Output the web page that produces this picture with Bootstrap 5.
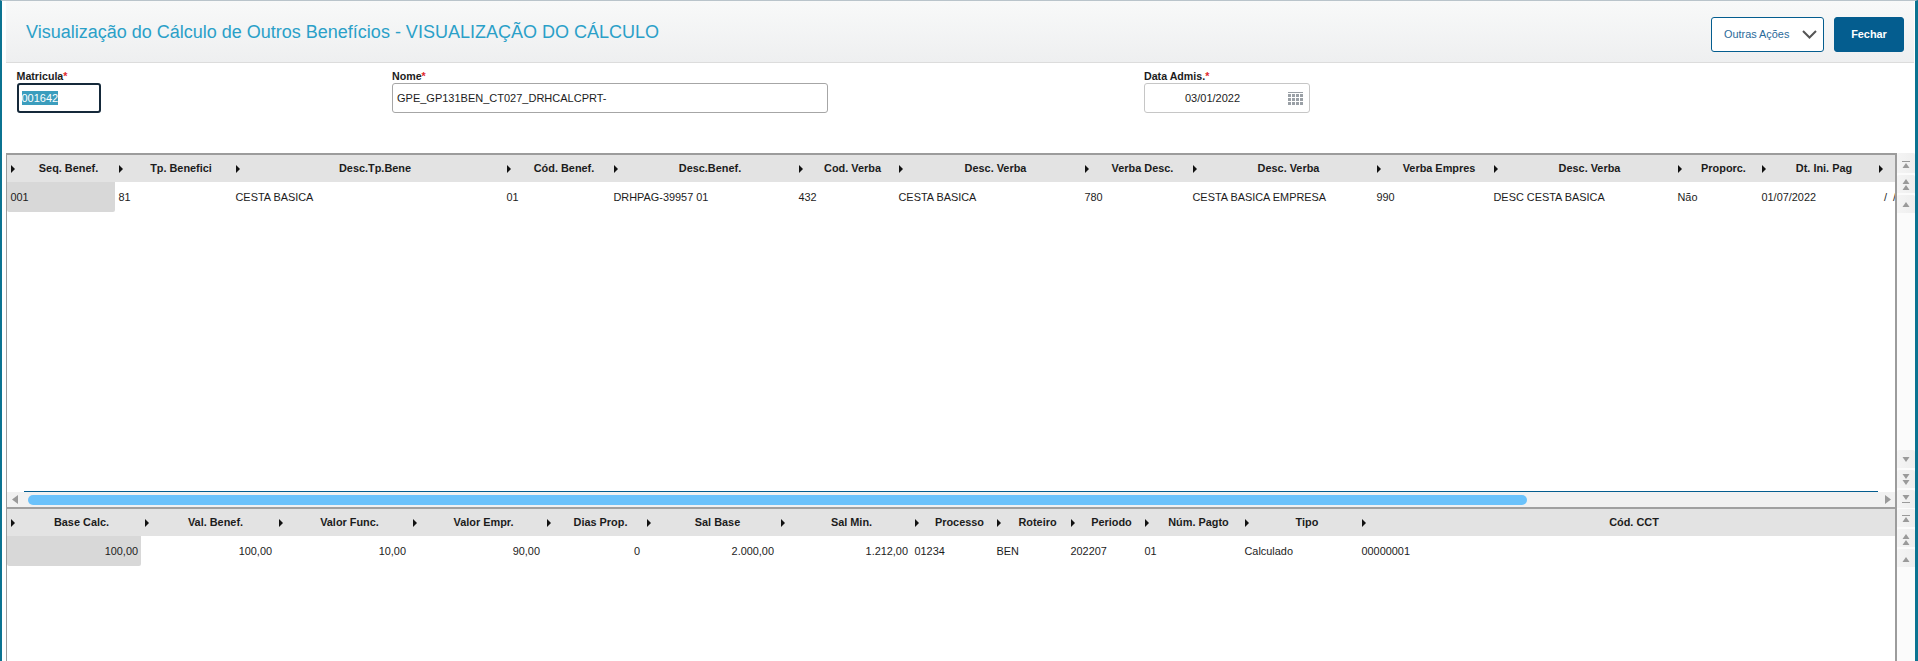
<!DOCTYPE html>
<html lang="pt-BR">
<head>
<meta charset="utf-8">
<title>Visualização do Cálculo</title>
<link href="https://cdn.jsdelivr.net/npm/bootstrap@5.3.0/dist/css/bootstrap.min.css" rel="stylesheet">
<style>
html,body{height:661px;overflow:hidden;background:#fff}
body{font-family:"Liberation Sans",Arial,sans-serif;font-size:10.67px;color:#1c1c1c}
.shell{height:661px;border-left:2px solid #0b7391;border-right:3px solid #0b7391;border-top:1px solid #b9c4cb;padding-left:4px}
.topbar{height:62px;flex:none;background:linear-gradient(#f8f9f9,#eeeff0);border-bottom:1px solid #dcdcdc;padding:0 10px 0 20px;margin-right:1px}
.page-title{font-size:18px;font-weight:400;color:#2aa0c8;margin:2px 0 0}
.btnrow{gap:10px;margin-top:5px}
.btn-more,.btn-close-page{height:35px;font-size:10.9px;border-radius:3px;padding:0}
.btn-more{width:113px;background:#fff;border:1px solid #045d8f;color:#2a6a9a;padding:0 6px 0 12px}
.btn-close-page{width:70px;background:#045d8f;border:1px solid #045d8f;color:#fff;font-weight:700}
.formzone{height:90px;flex:none;padding:7px 0 0 10.5px}
.fld-a{width:375.5px}.fld-b{width:752px}
.fld-label{font-weight:700;height:13px;line-height:13px;margin-bottom:0;display:block}
.req{color:#e0282e}
.fld-box{height:30px;border:1px solid #a6a6a6;border-radius:3px;background:#fff;padding:0 4px;line-height:28px;font-size:11px}
.fld-key{width:84px;border:2px solid #15293a;padding:0 3px;line-height:26px}
.fld-key span{background:#3b9dbd;color:#fff;padding:1px 0}
.fld-name{width:436px}
.fld-date{width:166px;border-color:#c6c6c6;padding:0 6px 0 40px}
.gridzone{height:508px;flex:none;border-left:1px solid #9c9c9c}
.gmain{min-width:0;overflow:hidden}
.gtop{height:356px}
.gtop .gmain{border-top:2px solid #9c9c9c}
.gbot{height:152px}
.gwrap{overflow:hidden}
.dtable{table-layout:fixed;margin:0;border-collapse:collapse;font-size:10.9px;color:#1c1c1c}
.dtable>:not(caption)>*>*{padding:0 3px 0 3.5px;border:0;background:transparent;box-shadow:none;color:inherit;vertical-align:middle;white-space:nowrap;overflow:hidden}
.dtable thead th{height:27px;background:#e3e3e3;font-weight:700;text-align:center;padding:0 2px 0 17px;position:relative}
.dtable tbody td{height:30px}
.dtable tbody td.cursor{background:#d8d8d8;border-radius:0 0 2px 2px}
.dtable td.num{text-align:right;padding-right:3px}
.sorter{position:absolute;left:4px;top:10px;width:4px;height:8px;fill:#111}
.t1{width:1988px}.t2{width:1887px}
.t1 col:nth-child(1){width:108px}.t1 col:nth-child(2){width:117px}.t1 col:nth-child(3){width:271px}
.t1 col:nth-child(4){width:107px}.t1 col:nth-child(5){width:185px}.t1 col:nth-child(6){width:100px}
.t1 col:nth-child(7){width:186px}.t1 col:nth-child(8){width:108px}.t1 col:nth-child(9){width:184px}
.t1 col:nth-child(10){width:117px}.t1 col:nth-child(11){width:184px}.t1 col:nth-child(12){width:84px}
.t1 col:nth-child(13){width:117px}.t1 col:nth-child(14){width:120px}
.t2 col:nth-child(1),.t2 col:nth-child(2),.t2 col:nth-child(3),.t2 col:nth-child(4),.t2 col:nth-child(6),.t2 col:nth-child(7){width:134px}
.t2 col:nth-child(5){width:100px}.t2 col:nth-child(8){width:82px}.t2 col:nth-child(9),.t2 col:nth-child(10){width:74px}
.t2 col:nth-child(11){width:100px}.t2 col:nth-child(12){width:117px}.t2 col:nth-child(13){width:537px}
.datecell{padding-left:9px!important}
.hscroll{height:15px;flex:none;background:#f1f1f1;position:relative}
.hbar{position:absolute;left:17px;right:17px;top:-1px;height:1px;background:#045d8f}
.hthumb{position:absolute;left:20.5px;width:1499px;top:3px;height:10px;background:#6bc2fb;border-radius:5px}
.harr-l{position:absolute;left:5px;top:3px}.harr-r{position:absolute;right:4px;top:3px}
.gsep{height:2px;flex:none;background:#a0a0a0}
.scol{width:20px;flex:none;border-left:2px solid #9c9c9c;background:#fbfbfb}
.sbtn{width:18px;height:18px;flex:none;background:linear-gradient(90deg,#f4f4f4,#eeeeee);border:0;padding:0;margin-bottom:2px;border-radius:2px 2px 0 0}
.sbtn svg{display:block;fill:#9a9a9a}
.sbtn-tall{height:20px}
.sbtn-tall svg{margin-top:1px}
.sbtn-end{margin-bottom:1px}
</style>
</head>
<body>
<div class="shell d-flex flex-column">
  <header class="topbar d-flex align-items-center justify-content-between">
    <h1 class="page-title">Visualização do Cálculo de Outros Benefícios - VISUALIZAÇÃO DO CÁLCULO</h1>
    <div class="btnrow d-flex">
      <button type="button" class="btn btn-more d-flex align-items-center justify-content-between">Outras Ações
        <svg width="15" height="9" viewBox="0 0 15 9"><path d="M1 1l6.5 6.5L14 1" fill="none" stroke="#555" stroke-width="2"/></svg>
      </button>
      <button type="button" class="btn btn-close-page">Fechar</button>
    </div>
  </header>
  <form class="formzone d-flex">
    <div class="fld-a"><label class="fld-label">Matricula<span class="req">*</span></label><div class="fld-box fld-key"><span>001642</span></div></div>
    <div class="fld-b"><label class="fld-label">Nome<span class="req">*</span></label><div class="fld-box fld-name">GPE_GP131BEN_CT027_DRHCALCPRT-</div></div>
    <div><label class="fld-label">Data Admis.<span class="req">*</span></label>
      <div class="fld-box fld-date d-flex align-items-center justify-content-between">03/01/2022
        <svg width="15" height="13" viewBox="0 0 15 13" fill="#9aa0a6"><path d="M0 0h15v1H0z"/><path d="M0 2h3v3H0zM4 2h3v3H4zM8 2h3v3H8zM12 2h3v3h-3zM0 6h3v3H0zM4 6h3v3H4zM8 6h3v3H8zM12 6h3v3h-3zM0 10h3v3H0zM4 10h3v3H4zM8 10h3v3H8zM12 10h3v3h-3z"/></svg>
      </div>
    </div>
  </form>
  <div class="gridzone d-flex flex-column">
    <section class="gtop d-flex">
      <div class="gmain flex-grow-1 d-flex flex-column">
        <div class="gwrap flex-grow-1">
          <table class="table dtable t1">
            <colgroup><col><col><col><col><col><col><col><col><col><col><col><col><col><col></colgroup>
            <thead><tr>
              <th><svg class="sorter" viewBox="0 0 5 9" preserveAspectRatio="none"><path d="M0 0l5 4.5L0 9z"/></svg>Seq. Benef.</th>
              <th><svg class="sorter" viewBox="0 0 5 9" preserveAspectRatio="none"><path d="M0 0l5 4.5L0 9z"/></svg>Tp. Benefici</th>
              <th><svg class="sorter" viewBox="0 0 5 9" preserveAspectRatio="none"><path d="M0 0l5 4.5L0 9z"/></svg>Desc.Tp.Bene</th>
              <th><svg class="sorter" viewBox="0 0 5 9" preserveAspectRatio="none"><path d="M0 0l5 4.5L0 9z"/></svg>Cód. Benef.</th>
              <th><svg class="sorter" viewBox="0 0 5 9" preserveAspectRatio="none"><path d="M0 0l5 4.5L0 9z"/></svg>Desc.Benef.</th>
              <th><svg class="sorter" viewBox="0 0 5 9" preserveAspectRatio="none"><path d="M0 0l5 4.5L0 9z"/></svg>Cod. Verba</th>
              <th><svg class="sorter" viewBox="0 0 5 9" preserveAspectRatio="none"><path d="M0 0l5 4.5L0 9z"/></svg>Desc. Verba</th>
              <th><svg class="sorter" viewBox="0 0 5 9" preserveAspectRatio="none"><path d="M0 0l5 4.5L0 9z"/></svg>Verba Desc.</th>
              <th><svg class="sorter" viewBox="0 0 5 9" preserveAspectRatio="none"><path d="M0 0l5 4.5L0 9z"/></svg>Desc. Verba</th>
              <th><svg class="sorter" viewBox="0 0 5 9" preserveAspectRatio="none"><path d="M0 0l5 4.5L0 9z"/></svg>Verba Empres</th>
              <th><svg class="sorter" viewBox="0 0 5 9" preserveAspectRatio="none"><path d="M0 0l5 4.5L0 9z"/></svg>Desc. Verba</th>
              <th><svg class="sorter" viewBox="0 0 5 9" preserveAspectRatio="none"><path d="M0 0l5 4.5L0 9z"/></svg>Proporc.</th>
              <th><svg class="sorter" viewBox="0 0 5 9" preserveAspectRatio="none"><path d="M0 0l5 4.5L0 9z"/></svg>Dt. Ini. Pag</th>
              <th><svg class="sorter" viewBox="0 0 5 9" preserveAspectRatio="none"><path d="M0 0l5 4.5L0 9z"/></svg></th>
            </tr></thead>
            <tbody><tr>
              <td class="cursor">001</td><td>81</td><td>CESTA BASICA</td><td>01</td><td>DRHPAG-39957 01</td><td>432</td><td>CESTA BASICA</td><td>780</td><td>CESTA BASICA EMPRESA</td><td>990</td><td>DESC CESTA BASICA</td><td>Não</td><td>01/07/2022</td><td class="datecell">/ &nbsp;/</td>
            </tr></tbody>
          </table>
        </div>
        <div class="hscroll">
          <span class="hbar"></span>
          <svg class="harr-l" width="6" height="9" viewBox="0 0 6 9" fill="#9a9a9a"><path d="M6 0L0 4.5 6 9z"/></svg>
          <span class="hthumb"></span>
          <svg class="harr-r" width="6" height="9" viewBox="0 0 6 9" fill="#9a9a9a"><path d="M0 0l6 4.5L0 9z"/></svg>
        </div>
        <div class="gsep"></div>
      </div>
      <aside class="scol d-flex flex-column">
        <button type="button" class="sbtn sbtn-tall" aria-label="Início"><svg width="18" height="18" viewBox="0 0 18 18"><path d="M5 6h8v1H5zM9 8l3.500 5h-7z"/></svg></button>
        <button type="button" class="sbtn" aria-label="Página acima"><svg width="18" height="18" viewBox="0 0 18 18"><path d="M9 4l3.500 5h-7zM9 10l3.500 5h-7z"/></svg></button>
        <button type="button" class="sbtn" aria-label="Acima"><svg width="18" height="18" viewBox="0 0 18 18"><path d="M9 7l3.500 5h-7z"/></svg></button>
        <div class="flex-grow-1"></div>
        <button type="button" class="sbtn" aria-label="Abaixo"><svg width="18" height="18" viewBox="0 0 18 18"><path d="M5.500 7h7L9 12z"/></svg></button>
        <button type="button" class="sbtn" aria-label="Página abaixo"><svg width="18" height="18" viewBox="0 0 18 18"><path d="M5.500 4h7L9 9zM5.500 10h7L9 15z"/></svg></button>
        <button type="button" class="sbtn sbtn-end" aria-label="Fim"><svg width="18" height="18" viewBox="0 0 18 18"><path d="M5.500 5h7L9 10zM5 12h8v1H5z"/></svg></button>
      </aside>
    </section>
    <section class="gbot d-flex">
      <div class="gmain flex-grow-1">
        <div class="gwrap">
          <table class="table dtable t2">
            <colgroup><col><col><col><col><col><col><col><col><col><col><col><col><col></colgroup>
            <thead><tr>
              <th><svg class="sorter" viewBox="0 0 5 9" preserveAspectRatio="none"><path d="M0 0l5 4.5L0 9z"/></svg>Base Calc.</th>
              <th><svg class="sorter" viewBox="0 0 5 9" preserveAspectRatio="none"><path d="M0 0l5 4.5L0 9z"/></svg>Val. Benef.</th>
              <th><svg class="sorter" viewBox="0 0 5 9" preserveAspectRatio="none"><path d="M0 0l5 4.5L0 9z"/></svg>Valor Func.</th>
              <th><svg class="sorter" viewBox="0 0 5 9" preserveAspectRatio="none"><path d="M0 0l5 4.5L0 9z"/></svg>Valor Empr.</th>
              <th><svg class="sorter" viewBox="0 0 5 9" preserveAspectRatio="none"><path d="M0 0l5 4.5L0 9z"/></svg>Dias Prop.</th>
              <th><svg class="sorter" viewBox="0 0 5 9" preserveAspectRatio="none"><path d="M0 0l5 4.5L0 9z"/></svg>Sal Base</th>
              <th><svg class="sorter" viewBox="0 0 5 9" preserveAspectRatio="none"><path d="M0 0l5 4.5L0 9z"/></svg>Sal Min.</th>
              <th><svg class="sorter" viewBox="0 0 5 9" preserveAspectRatio="none"><path d="M0 0l5 4.5L0 9z"/></svg>Processo</th>
              <th><svg class="sorter" viewBox="0 0 5 9" preserveAspectRatio="none"><path d="M0 0l5 4.5L0 9z"/></svg>Roteiro</th>
              <th><svg class="sorter" viewBox="0 0 5 9" preserveAspectRatio="none"><path d="M0 0l5 4.5L0 9z"/></svg>Periodo</th>
              <th><svg class="sorter" viewBox="0 0 5 9" preserveAspectRatio="none"><path d="M0 0l5 4.5L0 9z"/></svg>Núm. Pagto</th>
              <th><svg class="sorter" viewBox="0 0 5 9" preserveAspectRatio="none"><path d="M0 0l5 4.5L0 9z"/></svg>Tipo</th>
              <th><svg class="sorter" viewBox="0 0 5 9" preserveAspectRatio="none"><path d="M0 0l5 4.5L0 9z"/></svg>Cód. CCT</th>
            </tr></thead>
            <tbody><tr>
              <td class="cursor num">100,00</td><td class="num">100,00</td><td class="num">10,00</td><td class="num">90,00</td><td class="num">0</td><td class="num">2.000,00</td><td class="num">1.212,00</td><td>01234</td><td>BEN</td><td>202207</td><td>01</td><td>Calculado</td><td>00000001</td>
            </tr></tbody>
          </table>
        </div>
      </div>
      <aside class="scol d-flex flex-column">
        <button type="button" class="sbtn" aria-label="Início"><svg width="18" height="18" viewBox="0 0 18 18"><path d="M5 6h8v1H5zM9 8l3.500 5h-7z"/></svg></button>
        <button type="button" class="sbtn" aria-label="Página acima"><svg width="18" height="18" viewBox="0 0 18 18"><path d="M9 5l3.500 5h-7zM9 11l3.500 5h-7z"/></svg></button>
        <button type="button" class="sbtn" aria-label="Acima"><svg width="18" height="18" viewBox="0 0 18 18"><path d="M9 8l3.500 5h-7z"/></svg></button>
      </aside>
    </section>
  </div>
</div>
</body>
</html>
